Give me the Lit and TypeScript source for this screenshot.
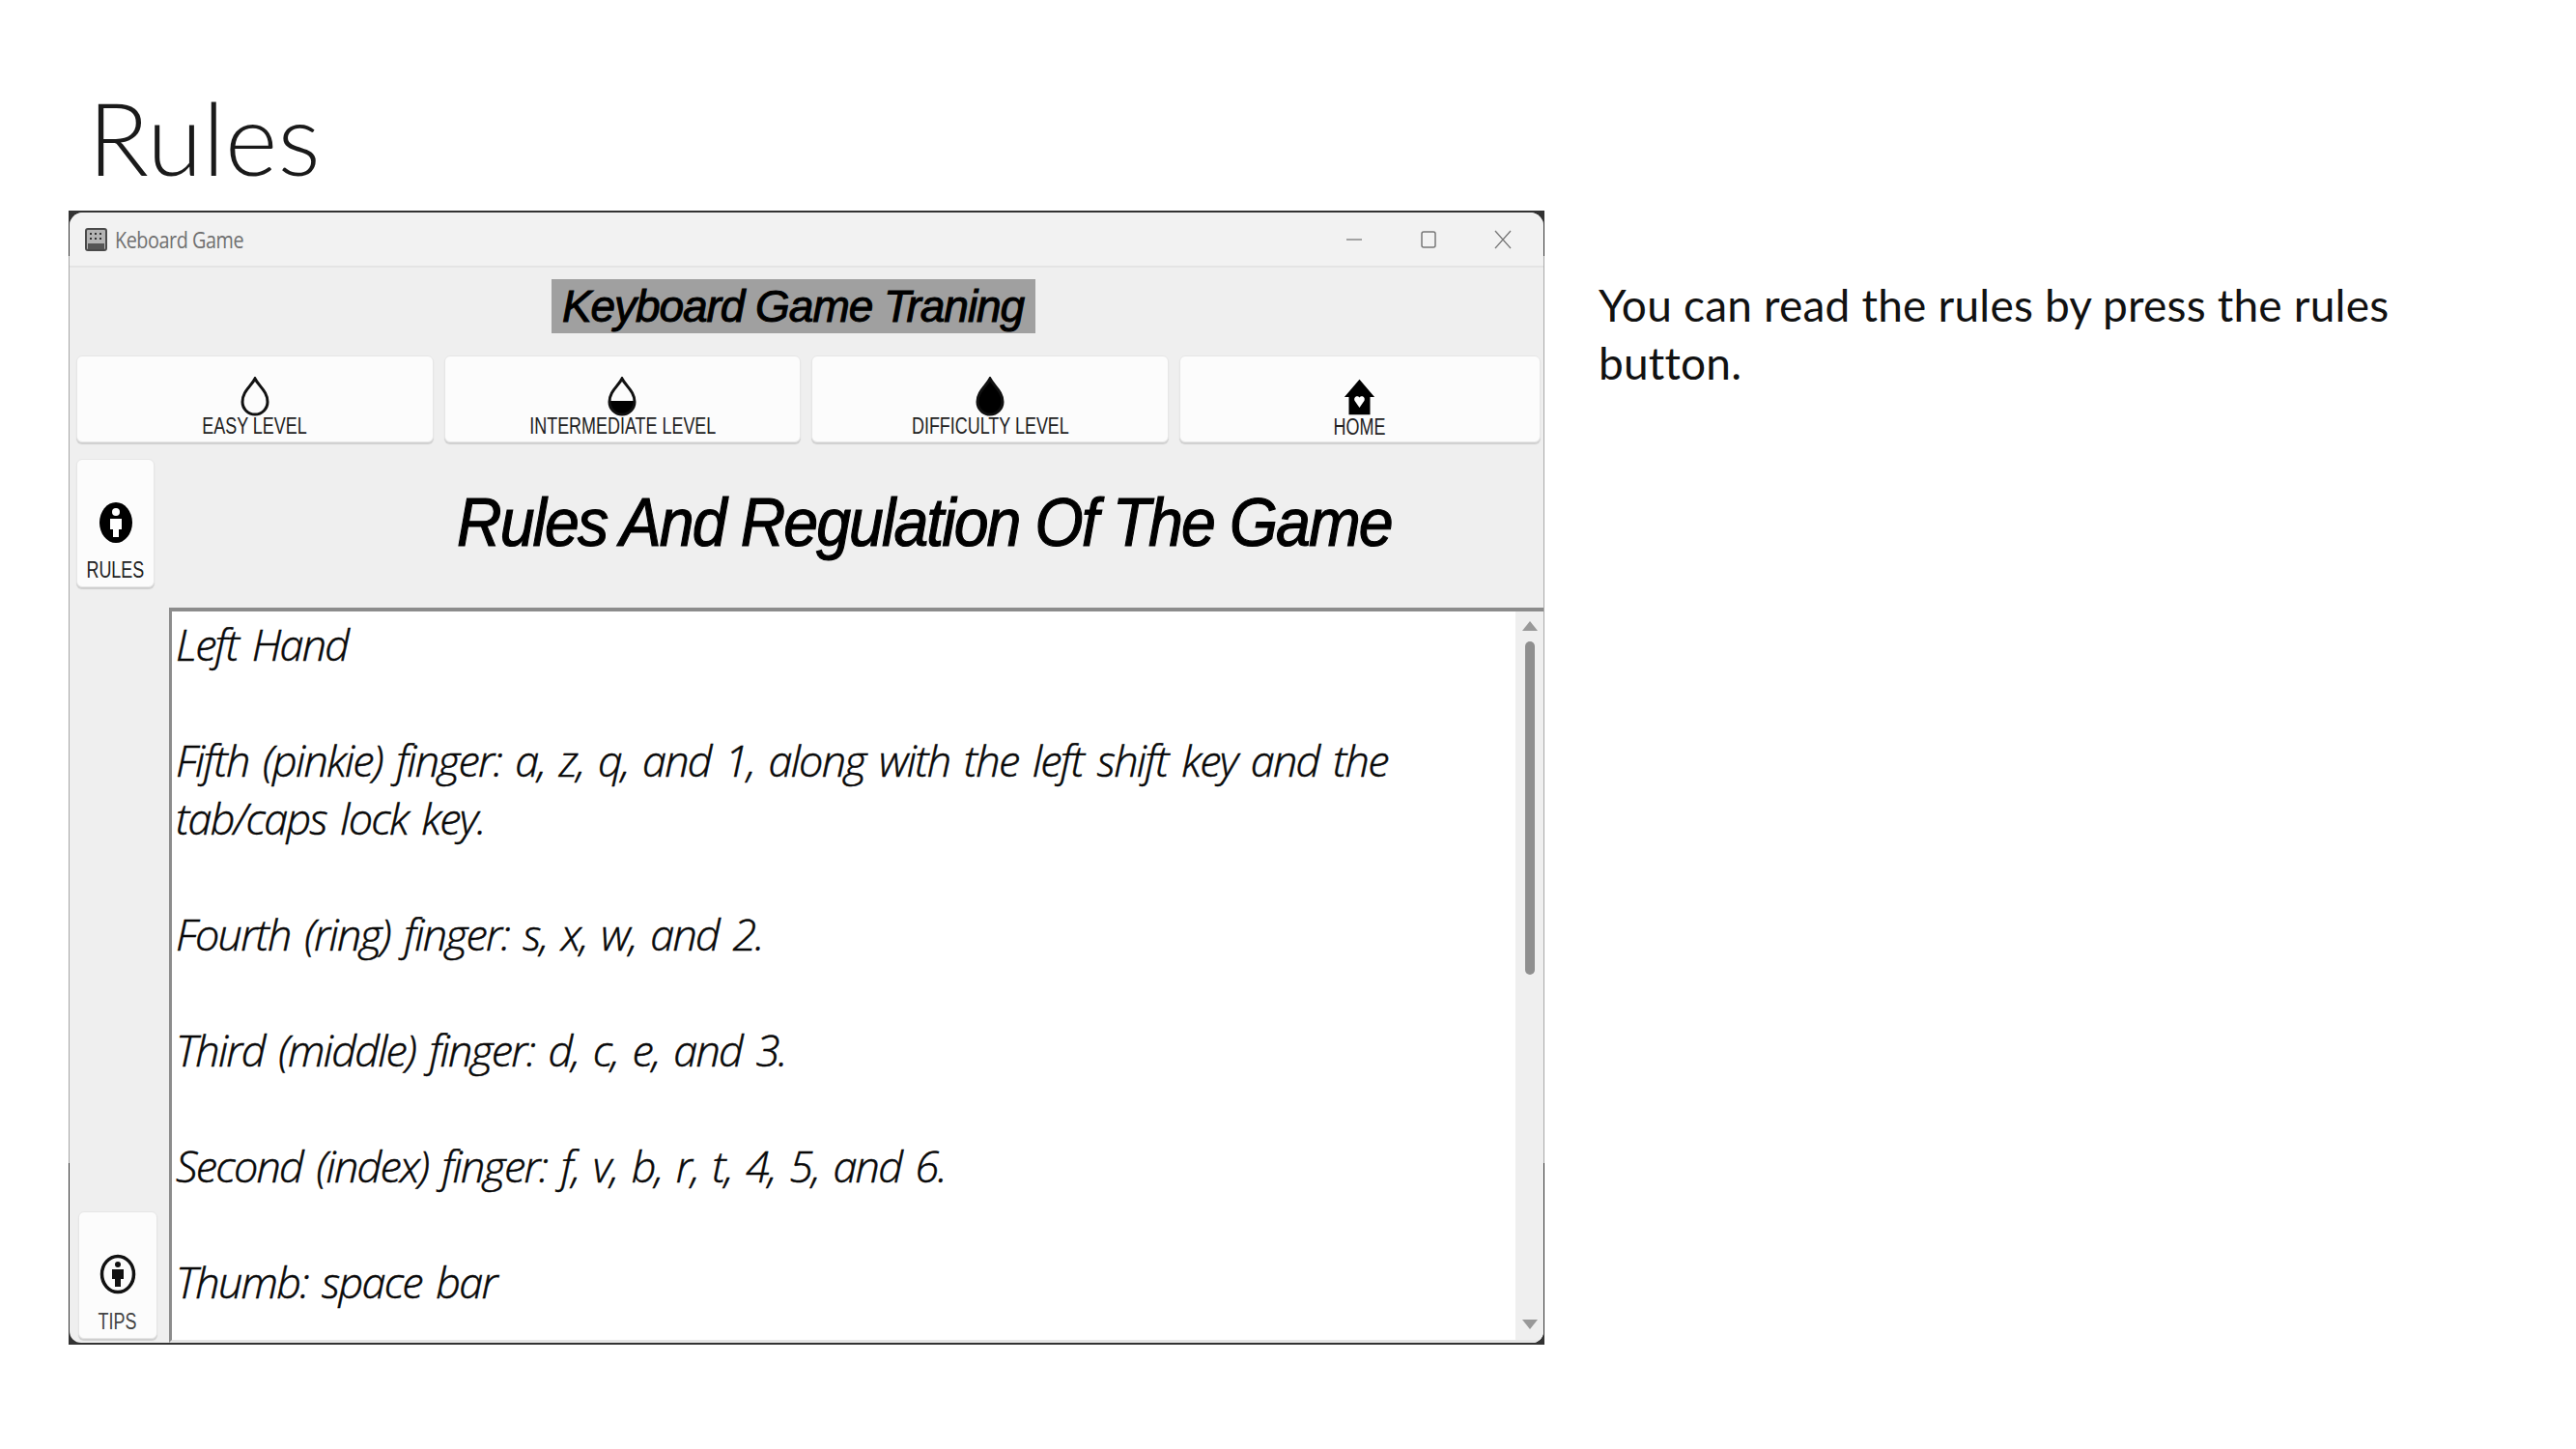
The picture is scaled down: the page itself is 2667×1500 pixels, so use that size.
import { LitElement, html, css, svg } from "lit";
import { customElement } from "lit/decorators.js";

const DROP = "M16 2C20 10 29 15 29 26A13 13 0 0 1 3 26C3 15 12 10 16 2Z";

const dropIcon = (kind: "empty" | "half" | "full") => html`
  <svg class="ico drop" viewBox="0 0 32 42" aria-hidden="true">
    ${kind === "half" ? svg`<path d="M3 25H29V27A13 13 0 0 1 3 27Z" fill="#000"/>` : ""}
    <path d=${DROP} fill=${kind === "full" ? "#000" : "none"} stroke="#111" stroke-width="3"/>
  </svg>`;

const homeIcon = html`
  <svg class="ico home" viewBox="0 0 36 40" aria-hidden="true">
    <path fill="#000" d="M18 0 35 20H30V40H6V20H1Z"/>
    <path fill="#fff" d="M18 32 12.5 24C11 19.5 16 17.5 18 20.5 20 17.5 25 19.5 23.5 24Z"/>
  </svg>`;

@customElement("app-root")
export class AppRoot extends LitElement {
  static styles = css`
    :host { display: block; width: 2667px; height: 1500px; background: #fff; overflow: hidden; }
    .title {
      height: 218px; box-sizing: border-box; padding: 90px 0 0 91px;
      font: 300 104px/1 Lato, sans-serif; color: #1a1a1a; letter-spacing: 0.3px;
    }
    .row { display: flex; align-items: flex-start; padding-left: 71px; }
    .frame {
      width: 1528px; height: 1174px; box-sizing: border-box; padding: 2px 1px 2px 1px; flex: none;
      background: linear-gradient(#333 0 4%, #a8a8a8 4% 84%, #333 84%);
    }
    .win {
      height: 100%; background: #efefef; border-radius: 14px 14px 12px 12px; overflow: hidden;
      display: flex; flex-direction: column;
    }
    .bar {
      height: 57px; flex: none; box-sizing: border-box; background: #f2f2f2; border-bottom: 2px solid #e4e4e4;
      display: flex; align-items: center; padding-left: 16px;
    }
    .bar .kb { width: 23px; height: 24px; margin-right: 8px; flex: none; }
    .bar .name {
      display: block; font: 23px "Open Sans", sans-serif; color: #707070; letter-spacing: -0.5px;
      transform: scaleX(0.86); transform-origin: left center; white-space: nowrap;
    }
    .bar .ctl { margin-left: auto; display: flex; align-items: center; }
    .bar .ctl svg { width: 20px; height: 20px; display: block; margin-right: 57px; }
    .bar .ctl svg:last-child { margin-right: 32px; }
    .banner { display: flex; justify-content: center; padding: 12px 28px 0 0; flex: none; }
    .banner div { background: #a0a0a0; height: 56px; width: 501px; display: flex; justify-content: center; }
    .banner span {
      display: block; white-space: nowrap;
      font: italic 400 46px/56px "Liberation Sans", sans-serif; color: #000; letter-spacing: -1.05px;
      -webkit-text-stroke: 1px #000;
    }
    .levels { display: flex; gap: 11px; padding: 23px 3px 0 7px; flex: none; }
    .btn {
      box-sizing: border-box; background: #fcfcfc; border: 1px solid #e6e6e6; border-radius: 6px;
      box-shadow: 0 2px 1px #cfcfcf; display: flex; flex-direction: column; align-items: center;
      font: 23px/1 "Liberation Sans", sans-serif; color: #222;
    }
    .btn span { display: block; white-space: nowrap; transform: scaleX(0.78); }
    .levels .btn { flex: 1 1 0; height: 90px; justify-content: flex-start; }
    .levels .btn:last-child { flex: 1.012 1 0; }
    .ico { display: block; flex: none; }
    .drop { width: 32px; height: 42px; margin-top: 21px; }
    .home { width: 33px; height: 40px; margin-top: 22px; }
    .levels .btn span { margin-top: -2px; }
    .levels .btn .home + span { margin-top: 0; }
    .main { flex: 1; min-height: 0; display: grid; grid-template-columns: 103px 1fr; grid-template-rows: 154px 1fr; padding-top: 17px; }
    .rail { grid-row: 1 / 3; display: flex; flex-direction: column; justify-content: space-between; padding: 0 0 4px 7px; }
    .rail .btn { justify-content: flex-end; padding-bottom: 5px; }
    .rules { width: 81px; height: 133px; }
    .tips { width: 82px; height: 132px; }
    .rules svg { width: 38px; height: 44px; margin-bottom: 16px; }
    .tips svg { width: 38px; height: 42px; margin-bottom: 17px; }
    .tips span { color: #444; }
    .rail .tips { margin-left: 2px; }
    h2 { margin: 0; padding: 31px 0 0 141px; display: flex; justify-content: center; }
    h2 span {
      display: block; white-space: nowrap; font: italic 400 70px/1 "Liberation Sans", sans-serif; color: #000;
      letter-spacing: -2.07px; -webkit-text-stroke: 1.2px #000; transform: scaleX(0.92);
    }
    .box {
      display: flex; min-height: 0; background: #fff; border-top: 4px solid #8c8c8c; border-left: 3px solid #8c8c8c;
      border-bottom: 3px solid #e6e6e6; overflow: hidden;
    }
    .text {
      flex: 1; padding: 4px 0 0 4px; font: italic 300 45px/60px "Open Sans", sans-serif; color: #0a0a0a;
      letter-spacing: -1.75px; word-spacing: 4.5px; -webkit-text-stroke: 0.5px #000; overflow: hidden;
    }
    .text p { margin: 0 0 60px; width: 1300px; }
    .scroll { width: 29px; flex: none; background: #efefef; display: flex; flex-direction: column; align-items: center; padding: 9px 0 10px 0; box-sizing: border-box; }
    .scroll svg { width: 18px; height: 12px; display: block; flex: none; }
    .thumb { width: 10px; height: 345px; background: #8f8f8f; border-radius: 5px; margin-top: 10px; }
    .scroll .down { margin-top: auto; }
    .note { width: 860px; margin: 68px 0 0 56px; font: 46px/60px Lato, sans-serif; color: #111; letter-spacing: 0.2px; }
  `;

  render() {
    return html`
      <div class="title">Rules</div>
      <div class="row">
        <div class="frame">
          <div class="win">
            <div class="bar">
              <svg class="kb" viewBox="0 0 23 24" aria-hidden="true">
                <rect x="1" y="1" width="21" height="22" rx="2" fill="#b4b4b4" stroke="#4a4a4a" stroke-width="2"/>
                <path d="M5 5h2v2H5zM10 5h2v2h-2zM15 5h2v2h-2zM5 10h2v2H5zM10 10h2v2h-2zM15 10h2v2h-2z" fill="#333"/>
                <path d="M3 16H20V22H3z" fill="#555"/>
              </svg>
              <span class="name">Keboard Game</span>
              <div class="ctl">
                <svg viewBox="0 0 20 20" aria-hidden="true"><path d="M2 10H18" stroke="#888" stroke-width="1.5"/></svg>
                <svg viewBox="0 0 20 20" aria-hidden="true"><rect x="3" y="2" width="14" height="16" rx="2" fill="none" stroke="#777" stroke-width="1.5"/></svg>
                <svg viewBox="0 0 20 20" aria-hidden="true"><path d="M2 1 18 19M18 1 2 19" stroke="#777" stroke-width="1.3"/></svg>
              </div>
            </div>
            <div class="banner"><div><span>Keyboard Game Traning</span></div></div>
            <div class="levels">
              <div class="btn">${dropIcon("empty")}<span>EASY LEVEL</span></div>
              <div class="btn">${dropIcon("half")}<span>INTERMEDIATE LEVEL</span></div>
              <div class="btn">${dropIcon("full")}<span>DIFFICULTY LEVEL</span></div>
              <div class="btn">${homeIcon}<span>HOME</span></div>
            </div>
            <div class="main">
              <div class="rail">
                <div class="btn rules">
                  <svg viewBox="0 0 38 44" aria-hidden="true">
                    <ellipse cx="19" cy="22" rx="17" ry="21" fill="#000"/>
                    <circle cx="19" cy="11" r="4" fill="#fff"/>
                    <path d="M13 18H25V29H22V37H16V29H13Z" fill="#fff"/>
                  </svg>
                  <span>RULES</span>
                </div>
                <div class="btn tips">
                  <svg viewBox="0 0 38 42" aria-hidden="true">
                    <ellipse cx="19" cy="21" rx="16.5" ry="18.5" fill="none" stroke="#111" stroke-width="3.5"/>
                    <circle cx="19" cy="11" r="3" fill="#111"/>
                    <path d="M13 16H25V26H22V34H16V26H13Z" fill="#111"/>
                  </svg>
                  <span>TIPS</span>
                </div>
              </div>
              <h2><span>Rules And Regulation Of The Game</span></h2>
              <div class="box">
                <div class="text">
                  <p>Left Hand</p>
                  <p>Fifth (pinkie) finger: a, z, q, and 1, along with the left shift key and the tab/caps lock key.</p>
                  <p>Fourth (ring) finger: s, x, w, and 2.</p>
                  <p>Third (middle) finger: d, c, e, and 3.</p>
                  <p>Second (index) finger: f, v, b, r, t, 4, 5, and 6.</p>
                  <p>Thumb: space bar</p>
                </div>
                <div class="scroll">
                  <svg viewBox="0 0 18 12" aria-hidden="true"><path d="M9 1 17 11H1Z" fill="#999"/></svg>
                  <div class="thumb"></div>
                  <svg class="down" viewBox="0 0 18 12" aria-hidden="true"><path d="M1 1H17L9 11Z" fill="#999"/></svg>
                </div>
              </div>
            </div>
          </div>
        </div>
        <p class="note">You can read the rules by press the rules button.</p>
      </div>
    `;
  }
}
